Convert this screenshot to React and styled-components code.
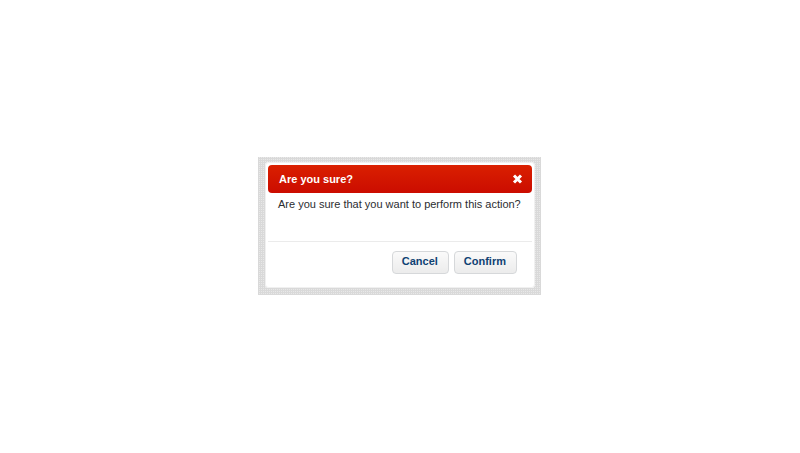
import React from "react";
import styled, { createGlobalStyle } from "styled-components";

const GlobalStyle = createGlobalStyle`
  * { box-sizing: border-box; }
  body {
    margin: 0;
    background: #fff;
    font-family: "Liberation Sans", Arial, sans-serif;
    font-size: 11px;
    line-height: 14px;
    color: #2b2d31;
  }
`;

const Page = styled.main`
  min-height: 100vh;
  display: flex;
  align-items: center;
  justify-content: center;
  padding: 0 1px 1px 0;
`;

const Backdrop = styled.div`
  width: 100%;
  max-width: 283px;
  padding: 5px 6px 7px 7px;
  background-image: conic-gradient(#e8e8e8 25%, #d9d9d9 0);
  background-size: 2px 2px;
`;

const Dialog = styled.section`
  padding: 3px;
  background: #fff;
  border-radius: 4px;
  box-shadow: inset 0 0 0 1px #f0f0f0;
`;

const Header = styled.header`
  display: flex;
  align-items: center;
  justify-content: space-between;
  padding: 7px 9px 7px 11px;
  border-radius: 4px;
  background: linear-gradient(#da2000, #cb0c00);
  color: #fff;
`;

const Title = styled.h1`
  margin: 0;
  font-size: 11px;
  line-height: 14px;
  font-weight: bold;
`;

const CloseButton = styled.button`
  display: flex;
  padding: 0;
  border: 0;
  background: none;
  color: inherit;
  cursor: pointer;
`;

const Message = styled.p`
  margin: 0;
  padding: 4px 10px 30px;
  white-space: nowrap;
`;

const Footer = styled.footer`
  display: flex;
  justify-content: flex-end;
  gap: 5px;
  padding: 9px 15px 11px;
  border-top: 1px solid #ebebeb;
`;

const ActionButton = styled.button`
  padding: 2px 10px 5px 9px;
  border: 1px solid #d6d8da;
  border-radius: 4px;
  background: linear-gradient(#fafafa, #ececec);
  color: #0f4273;
  font: bold 11px/14px "Liberation Sans", Arial, sans-serif;
  cursor: pointer;
`;

const CloseIcon = () => (
  <svg width="11" height="12" viewBox="0 0 11 12" aria-hidden="true">
    <path
      d="M2 2.5 9 9.5M9 2.5 2 9.5"
      stroke="currentColor"
      strokeWidth="3"
      fill="none"
    />
  </svg>
);

export default function App() {
  return (
    <>
      <GlobalStyle />
      <Page>
        <Backdrop>
          <Dialog role="dialog" aria-labelledby="dialog-title" aria-describedby="dialog-message">
            <Header>
              <Title id="dialog-title">Are you sure?</Title>
              <CloseButton type="button" aria-label="Close">
                <CloseIcon />
              </CloseButton>
            </Header>
            <Message id="dialog-message">Are you sure that you want to perform this action?</Message>
            <Footer>
              <ActionButton type="button">Cancel</ActionButton>
              <ActionButton type="button">Confirm</ActionButton>
            </Footer>
          </Dialog>
        </Backdrop>
      </Page>
    </>
  );
}
